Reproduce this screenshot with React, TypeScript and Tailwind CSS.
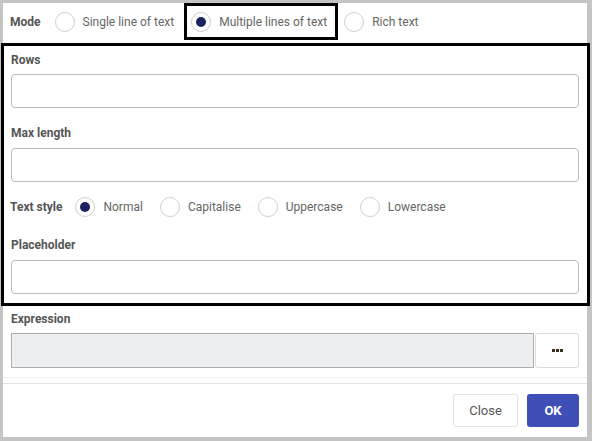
import { useState } from "react";

type RadioProps = {
  label: string;
  checked: boolean;
  onClick: () => void;
  boxed?: boolean;
};

const Radio = ({ label, checked, onClick, boxed }: RadioProps) => {
  return (
    <span
      className="relative flex items-center gap-[8px] cursor-pointer"
      onClick={onClick}
    >
      <span className="w-[20px] h-[20px] rounded-full border border-[#cfcfcf] bg-white flex items-center justify-center">
        {checked && (
          <span className="w-[10px] h-[10px] rounded-full bg-[#1b2461]" />
        )}
      </span>
      <span className="text-[12px] text-[#666]">{label}</span>
      {boxed && (
        <span className="absolute -left-[7px] -right-[11px] -top-[9px] -bottom-[8px] border-[3px] border-black pointer-events-none" />
      )}
    </span>
  );
};

const Field = ({ label, gap = 6 }: { label: string; gap?: number }) => {
  return (
    <div>
      <label className="block text-[12px] leading-4 font-bold text-[#555]">
        {label}
      </label>
      <input
        type="text"
        className={
          "block w-full h-[34px] border border-[#bdbdbd] rounded-[4px] bg-white outline-none " +
          (gap === 7 ? "mt-[7px]" : "mt-[6px]")
        }
      />
    </div>
  );
};

const App = () => {
  const [mode, setMode] = useState<string>("multi");
  const [textStyle, setTextStyle] = useState<string>("normal");

  return (
    <div
      className="w-[592px] h-[441px] bg-[#c4c4c4] pt-[3px] pl-[3px] pr-[5px] pb-[4px]"
      style={{ fontFamily: "Roboto, 'Liberation Sans', sans-serif" }}
    >
      <div className="bg-white h-full flex flex-col">
        {/* mode row */}
        <div className="h-[37px] flex items-center px-[7px]">
          <span className="text-[12px] font-bold text-[#555] mr-[14px]">
            Mode
          </span>
          <Radio
            label="Single line of text"
            checked={mode === "single"}
            onClick={() => setMode("single")}
          />
          <span className="ml-[17px]">
            <Radio
              label="Multiple lines of text"
              checked={mode === "multi"}
              onClick={() => setMode("multi")}
              boxed
            />
          </span>
          <span className="ml-[17px]">
            <Radio
              label="Rich text"
              checked={mode === "rich"}
              onClick={() => setMode("rich")}
            />
          </span>
        </div>

        {/* options section */}
        <div className="relative mt-[3px] pt-[9px] pb-[12px] px-[8px]">
          <span className="absolute -left-[2px] -right-[3px] top-0 bottom-0 border-[3px] border-black pointer-events-none" />
          <Field label="Rows" />
          <div className="mt-[17px]">
            <Field label="Max length" gap={7} />
          </div>
          <div className="mt-[15px] h-[20px] flex items-center">
            <span className="text-[12px] font-bold text-[#555] mr-[13px] -ml-[1px]">
              Text style
            </span>
            <Radio
              label="Normal"
              checked={textStyle === "normal"}
              onClick={() => setTextStyle("normal")}
            />
            <span className="ml-[17px]">
              <Radio
                label="Capitalise"
                checked={textStyle === "cap"}
                onClick={() => setTextStyle("cap")}
              />
            </span>
            <span className="ml-[17px]">
              <Radio
                label="Uppercase"
                checked={textStyle === "upper"}
                onClick={() => setTextStyle("upper")}
              />
            </span>
            <span className="ml-[17px]">
              <Radio
                label="Lowercase"
                checked={textStyle === "lower"}
                onClick={() => setTextStyle("lower")}
              />
            </span>
          </div>
          <div className="mt-[20px]">
            <Field label="Placeholder" gap={7} />
          </div>
        </div>

        {/* expression */}
        <div className="px-[8px] pt-[5px] pb-[9px] border-b border-[#f0f0f0]">
          <label className="block text-[12px] leading-4 font-bold text-[#555]">
            Expression
          </label>
          <div className="mt-[6px] flex h-[35px]">
            <div className="flex-1 bg-[#eceff0] border border-[#aeaeae]" />
            <button className="w-[44px] ml-[1px] bg-white border border-[#dcdcdc] rounded-[3px] flex items-center justify-center gap-[1px]">
              <span className="w-[3px] h-[3px] bg-[#3a2f1f]" />
              <span className="w-[3px] h-[3px] bg-[#3a2f1f]" />
              <span className="w-[3px] h-[3px] bg-[#3a2f1f]" />
            </button>
          </div>
        </div>

        {/* footer */}
        <div className="mt-[5px] border-t border-[#e2e2e2] flex-1 flex items-center justify-end gap-[9px] pr-[8px]">
          <button className="w-[65px] h-[33px] bg-white border border-[#e3e3e3] rounded-[3px] text-[13px] text-[#555]">
            Close
          </button>
          <button className="w-[52px] h-[33px] bg-[#3f4fb8] rounded-[3px] text-[13px] font-bold text-white">
            OK
          </button>
        </div>
      </div>
    </div>
  );
};

export default App;
